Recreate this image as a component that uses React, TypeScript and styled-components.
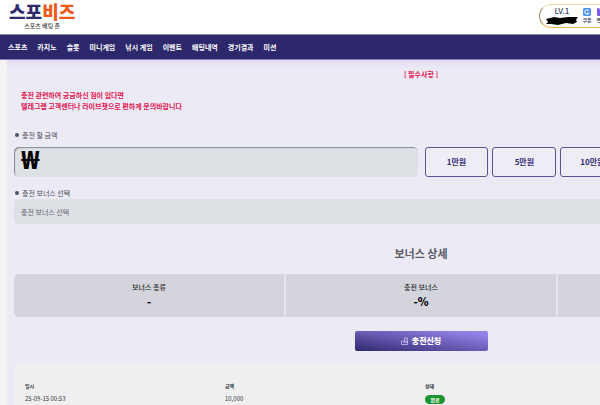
import React, { useState } from "react";
import styled, { createGlobalStyle } from "styled-components";

const GlobalStyle = createGlobalStyle`
  *, *::before, *::after { box-sizing: border-box; }
  html { overflow: hidden; }
  body {
    margin: 0;
    background: #f3f3f4;
    color: #23252c;
    font-family: "Noto Sans CJK KR", "Noto Sans", sans-serif;
    font-size: 7px;
    line-height: 10px;
  }
  button, input, select { font: inherit; color: inherit; margin: 0; }
  h1, h2, p { margin: 0; }
`;

const Page = styled.div`
  min-height: 100vh;
  overflow: hidden;
`;

const Header = styled.header`
  display: flex;
  justify-content: space-between;
  align-items: flex-start;
  height: 34px;
  padding-left: 9px;
  background: #fff;
`;

const Logo = styled.a`
  display: flex;
  flex-direction: column;
  align-items: center;
  padding-top: 1px;
  color: #2e2a6e;
  text-decoration: none;
`;

const LogoName = styled.span`
  font-size: 18px;
  line-height: 20px;
  font-weight: 900;
`;

const LogoAccent = styled.span`
  color: #ee5a17;
`;

const Tagline = styled.span`
  color: #3c3c3c;
  font-size: 6px;
  line-height: 10px;
  font-weight: 500;
`;

const Member = styled.div`
  display: flex;
  flex: none;
  gap: 4px;
  width: 72px;
  height: 24px;
  margin: 4px -11px 0 0;
  padding: 1px 0 0 6px;
  border: 1px solid #e8b45c;
  border-top-color: #ecd9a8;
  border-left-color: #a8845c;
  border-radius: 12px;
  background: #fff;
`;

const Level = styled.div`
  display: flex;
  flex-direction: column;
  align-items: center;
  width: 32px;
  color: #3c4660;
  font-size: 8px;
  line-height: 10px;
  font-weight: 500;
`;

const Shortcut = styled.a`
  display: flex;
  flex: none;
  flex-direction: column;
  align-items: center;
  width: 10px;
  padding-top: 2px;
  color: #454b5e;
  font-size: 5px;
  line-height: 8px;
  font-weight: 700;
  white-space: nowrap;
  text-decoration: none;
`;

const Nav = styled.nav`
  display: flex;
  align-items: center;
  gap: 10px;
  height: 26px;
  padding: 0 8px;
  background: #2d276b;
  border-top: 1px solid #8e89b0;
  border-bottom: 1px solid #8a7fb8;
`;

const NavLink = styled.a`
  color: #fff;
  font-weight: 700;
  white-space: nowrap;
  text-decoration: none;
`;

const Panel = styled.main`
  min-width: 828px;
  margin-left: 7px;
  padding: 9px 7px 0;
  background: linear-gradient(#e6def4, #ecebf5 10px);
`;

const Required = styled.h2`
  color: #e11550;
  font-size: 7px;
  line-height: 10px;
  font-weight: 700;
  text-align: center;
`;

const Notice = styled.p`
  padding: 11px 7px 0;
  color: #e11550;
  line-height: 11px;
  font-weight: 700;
`;

const FieldLabel = styled.label<{ $top: number }>`
  display: flex;
  align-items: center;
  gap: 3px;
  margin-top: ${(p) => p.$top}px;
  padding-left: 1px;
  color: #454b55;

  &::before {
    content: "";
    width: 4px;
    height: 4px;
    border-radius: 50%;
    background: #4d5665;
  }
`;

const AmountRow = styled.div`
  display: grid;
  grid-template-columns: 1fr 1fr;
  gap: 7px;
  margin-top: 7px;
`;

const AmountBox = styled.div`
  display: flex;
  align-items: flex-start;
  height: 30px;
  padding: 0 7px;
  border-radius: 5px;
  background: #dde1e6;
  box-shadow: inset 1px 1px 1px #858a92;
`;

const Currency = styled.span`
  color: #000;
  font-family: "Noto Sans", sans-serif;
  font-size: 24px;
  line-height: 26px;
  font-weight: 900;
`;

const AmountInput = styled.input`
  flex: 1;
  min-width: 0;
  height: 30px;
  padding: 0 4px;
  border: 0;
  outline: 0;
  background: transparent;
  font-size: 14px;
  line-height: 20px;
`;

const Presets = styled.div`
  display: grid;
  grid-template-columns: repeat(6, 1fr);
  gap: 4px;
`;

const PresetButton = styled.button`
  padding: 0;
  border: 1px solid #5b5393;
  border-radius: 3px;
  background: #eeedf6;
  color: #332b74;
  font-size: 8px;
  font-weight: 700;
`;

const BonusSelect = styled.select`
  display: block;
  width: 100%;
  height: 25px;
  margin-top: 1px;
  padding: 0 7px;
  border: 0;
  border-radius: 5px;
  appearance: none;
  background: #dde1e6;
  color: #5f626a;
`;

const SectionTitle = styled.h2`
  margin-top: 21px;
  color: #5a5c65;
  font-size: 11px;
  line-height: 16px;
  font-weight: 700;
  text-align: center;
`;

const BonusGrid = styled.div`
  display: grid;
  grid-template-columns: repeat(3, 1fr);
  gap: 2px;
  margin-top: 13px;
  overflow: hidden;
  border-radius: 5px;
  background: #e6e6eb;
`;

const BonusCell = styled.div`
  display: flex;
  flex-direction: column;
  align-items: center;
  gap: 2px;
  height: 43px;
  padding-top: 8px;
  background: #d4d5dc;
  color: #1d1e23;
  font-weight: 500;
`;

const BonusValue = styled.strong`
  color: #050507;
  font-size: 11px;
  line-height: 14px;
  font-weight: 900;
`;

const SubmitButton = styled.button`
  display: flex;
  align-items: center;
  justify-content: center;
  gap: 4px;
  width: 133px;
  height: 20px;
  margin: 14px auto 0;
  padding: 0;
  border: 0;
  border-radius: 2px;
  background: linear-gradient(to top right, #2f286c, #6a5bb4 50%, #9181e8 88%);
  color: #fff;
  font-size: 8px;
  font-weight: 900;
`;

const History = styled.section`
  margin-top: 13px;
  padding: 15px 3px 12px 11px;
  border-radius: 4px;
  background: #efefef;
`;

const HistoryTable = styled.table`
  width: 100%;
  table-layout: fixed;
  border-collapse: collapse;
  color: #33353b;
  text-align: left;

  th, td { padding: 0; }
  th { height: 14px; font-size: 5px; font-weight: 700; }
  td { height: 12px; font-size: 6px; }
`;

const Status = styled.span`
  display: block;
  width: 20px;
  border-radius: 5px;
  background: #1c9430;
  color: #fff;
  font-size: 5px;
  line-height: 9px;
  font-weight: 700;
  text-align: center;
`;

const menu = ["스포츠", "카지노", "슬롯", "미니게임", "낚시 게임", "이벤트", "배팅내역", "경기결과", "미션"];
const presets = ["1만원", "5만원", "10만원", "50만원", "100만원", "정정"];
const bonuses = [
  { label: "보너스 종류", value: "-" },
  { label: "충전 보너스", value: "-%" },
  { label: "보너스 금액", value: "-" },
];

const MaskedName = () => (
  <svg width="32" height="9" viewBox="0 0 32 9" aria-hidden="true">
    <path d="M0 3 L4 2 L8 1 L14 2 L22 1 L32 1 L30 4 L31 6 L27 8 L20 7 L12 9 L5 8 L0 8 L2 6 Z" fill="#050505" />
  </svg>
);

const CouponIcon = () => (
  <svg width="8" height="8" viewBox="0 0 16 16" aria-hidden="true">
    <rect width="16" height="16" rx="3" fill="#4b8ff5" />
    <path d="M11.5 5.2A4.4 4.4 0 1 0 12 10H8" fill="none" stroke="#d5efff" strokeWidth="2.4" />
  </svg>
);

const MessageIcon = () => (
  <svg width="8" height="8" viewBox="0 0 16 16" aria-hidden="true">
    <rect width="16" height="16" rx="2" fill="#7a5ce6" />
    <path d="M3 0 L10 8 L16 3 V0 Z" fill="#d9ccff" />
  </svg>
);

const DepositIcon = () => (
  <svg width="7" height="8" viewBox="0 0 14 16" fill="none" stroke="#d5cff5" strokeWidth="1.4" aria-hidden="true">
    <path d="M1 8V15H13V8M1 8H6V11H13M7 8V2H13V8H7" />
  </svg>
);

export default function App() {
  const [amount, setAmount] = useState("");

  return (
    <Page>
      <GlobalStyle />
      <Header>
        <Logo href="#">
          <LogoName>
            스포<LogoAccent>비즈</LogoAccent>
          </LogoName>
          <Tagline>스포츠 배팅 존</Tagline>
        </Logo>
        <Member>
          <Level>
            LV.1
            <MaskedName />
          </Level>
          <Shortcut href="#coupon">
            <CouponIcon />
            쿠폰
          </Shortcut>
          <Shortcut href="#message">
            <MessageIcon />
            쪽지
          </Shortcut>
        </Member>
      </Header>
      <Nav>
        {menu.map((item) => (
          <NavLink key={item} href="#">
            {item}
          </NavLink>
        ))}
      </Nav>
      <Panel>
        <Required>[ 필수사항 ]</Required>
        <Notice>
          충전 관련하여 궁금하신 점이 있다면
          <br />
          텔레그램 고객센터나 라이브챗으로 편하게 문의바랍니다
        </Notice>

        <FieldLabel htmlFor="amount" $top={18}>
          충전 할 금액
        </FieldLabel>
        <AmountRow>
          <AmountBox>
            <Currency>₩</Currency>
            <AmountInput id="amount" inputMode="numeric" value={amount} onChange={(e) => setAmount(e.target.value)} />
          </AmountBox>
          <Presets>
            {presets.map((preset) => (
              <PresetButton key={preset} type="button">
                {preset}
              </PresetButton>
            ))}
          </Presets>
        </AmountRow>

        <FieldLabel htmlFor="bonus" $top={11}>
          충전 보너스 선택
        </FieldLabel>
        <BonusSelect id="bonus">
          <option>충전 보너스 선택</option>
        </BonusSelect>

        <SectionTitle>보너스 상세</SectionTitle>
        <BonusGrid>
          {bonuses.map((bonus) => (
            <BonusCell key={bonus.label}>
              {bonus.label}
              <BonusValue>{bonus.value}</BonusValue>
            </BonusCell>
          ))}
        </BonusGrid>
        <SubmitButton type="submit">
          <DepositIcon />
          충전신청
        </SubmitButton>

        <History>
          <HistoryTable>
            <thead>
              <tr>
                <th scope="col">일시</th>
                <th scope="col">금액</th>
                <th scope="col">상태</th>
                <th scope="col">관리</th>
              </tr>
            </thead>
            <tbody>
              <tr>
                <td>25-09-15 00:53</td>
                <td>10,000</td>
                <td>
                  <Status>완료</Status>
                </td>
                <td />
              </tr>
            </tbody>
          </HistoryTable>
        </History>
      </Panel>
    </Page>
  );
}
